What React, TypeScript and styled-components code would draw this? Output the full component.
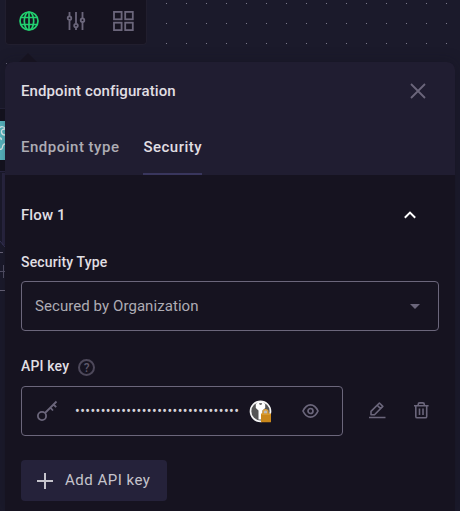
import React from 'react';
import styled, { createGlobalStyle } from 'styled-components';

const GlobalStyle = createGlobalStyle`
  * { box-sizing: border-box; }
  body {
    margin: 0;
    background: #1b1a2b;
    font-family: Roboto, sans-serif;
    font-size: 14px;
    color: #e0dfe3;
    overflow: hidden;
  }
  svg { display: block; flex: none; }
  button { font: inherit; color: inherit; border: 0; padding: 0; background: none; }
`;

const Screen = styled.div`
  position: relative;
  width: 460px;
  height: 511px;
  overflow: hidden;
  background-color: #1b1a2b;
`;

const Backdrop = styled.svg`
  position: absolute;
  inset: 0;
`;

const Content = styled.div`
  position: relative;
  display: flex;
  flex-direction: column;
  width: 450px;
  height: 511px;
  margin-left: 5px;
`;

const Toolbar = styled.nav`
  display: flex;
  align-items: center;
  gap: 27px;
  width: 142px;
  height: 45px;
  padding: 0 13px 3px;
  background: #161320;
  border: 1px solid #211e2e;
  border-top: 0;
  border-radius: 0 0 4px 4px;
`;

const ToolButton = styled.button<{ $active?: boolean }>`
  display: flex;
  width: 20px;
  height: 20px;
  color: ${p => (p.$active ? '#22d06f' : '#6b667b')};
`;

const Pointer = styled.div`
  width: 18px;
  height: 9px;
  margin: 8px 0 0 14px;
  background: #161320;
  clip-path: polygon(50% 0, 100% 100%, 0 100%);
`;

const Panel = styled.section`
  flex: 1;
  background: #161320;
  border-radius: 8px 8px 0 0;
  overflow: hidden;
  box-shadow: 0 0 14px rgba(18, 16, 28, 0.35);
`;

const PanelHeader = styled.header`
  height: 113px;
  padding: 0 16px;
  background: #201d31;
`;

const TitleRow = styled.div`
  display: flex;
  align-items: center;
  justify-content: space-between;
  height: 58px;
  padding-right: 13px;
`;

const Title = styled.h1`
  margin: 0;
  font-size: 15px;
  font-weight: 500;
  letter-spacing: 0.1px;
`;

const CloseButton = styled.button`
  display: flex;
  color: #6b667b;
`;

const Tabs = styled.div`
  display: flex;
  gap: 24px;
  height: 55px;
`;

const Tab = styled.button<{ $active?: boolean }>`
  display: flex;
  align-items: center;
  height: 55px;
  font-size: 15px;
  font-weight: 500;
  letter-spacing: 0.5px;
  color: ${p => (p.$active ? '#e0dfe3' : '#aeacb4')};
  border-bottom: 2px solid ${p => (p.$active ? '#39365d' : 'transparent')};
`;

const PanelBody = styled.div`
  padding: 0 16px;
`;

const FlowRow = styled.div`
  display: flex;
  align-items: center;
  justify-content: space-between;
  height: 80px;
  padding-right: 23px;
  font-size: 15px;
  font-weight: 500;
  letter-spacing: 0.1px;
`;

const FieldLabel = styled.div`
  display: flex;
  gap: 9px;
  line-height: 16px;
  font-weight: 500;
  letter-spacing: 0.15px;
`;

const TypeLabel = styled(FieldLabel)`
  height: 26px;
  margin-top: -1px;
  margin-bottom: 1px;
`;

const KeyLabel = styled(FieldLabel)`
  height: 55px;
  padding-top: 27px;
`;

const HelpMark = styled.span`
  display: flex;
  align-items: center;
  justify-content: center;
  width: 17px;
  height: 17px;
  margin-top: 1px;
  border: 2px solid #4d485a;
  border-radius: 50%;
  font-size: 12px;
  line-height: 12px;
  letter-spacing: 0;
  color: #5d586b;
`;

const Select = styled.div`
  display: flex;
  align-items: center;
  justify-content: space-between;
  height: 50px;
  padding: 0 18px 0 13px;
  border: 1px solid #6b667b;
  border-radius: 4px;
  font-size: 15px;
  letter-spacing: 0.07px;
  color: #aeacb4;
`;

const KeyRow = styled.div`
  display: flex;
  align-items: center;
  height: 50px;
  color: #6b667b;
`;

const KeyInput = styled.div`
  display: flex;
  align-items: center;
  width: 322px;
  height: 50px;
  padding-left: 14px;
  border: 1px solid #6b667b;
  border-radius: 4px;
`;

const Secret = styled.span`
  width: 166px;
  margin-left: 17px;
  font-size: 14px;
  letter-spacing: 0.41px;
  white-space: nowrap;
  color: #d6d4da;
`;

const IconSlot = styled.span<{ $gap: number }>`
  display: flex;
  margin-left: ${p => p.$gap}px;
`;

const AddButton = styled.button`
  display: flex;
  align-items: center;
  gap: 12px;
  width: 146px;
  height: 41px;
  margin-top: 24px;
  padding-left: 16px;
  border-radius: 4px;
  background: #25223a;
  font-size: 15px;
  letter-spacing: 0.5px;
  color: #c6c4cc;
  white-space: nowrap;
`;

const AddText = styled.span`
  padding-bottom: 2px;
`;

const dotColumns = Array.from({ length: 15 }, (_, i) => 166 + i * 20);

const CanvasBackdrop = () => (
  <Backdrop width="460" height="511" viewBox="0 0 460 511" shapeRendering="crispEdges">
    {[3, 23, 43].map(y => dotColumns.map(x => <rect key={`${x}-${y}`} x={x} y={y} width="1" height="1" fill="#7c7b8b" />))}
    <rect x="6" y="63" width="1" height="1" fill="#6b6a7c" />
    <rect x="0" y="109" width="5" height="62" fill="#14121e" />
    <rect x="0" y="108" width="5" height="1" fill="#252338" />
    <rect x="0" y="121" width="5" height="39" fill="#5abcc6" />
    <g shapeRendering="auto" fill="none" stroke="#e4f7f8" strokeWidth="1.3">
      <path d="M0 127.5Q2 125.5 5 128M5 129Q1 129 1.5 132.5Q2 135 5 135M0 138Q2 138 1 140M0 149Q2 150 2.5 147Q3 144 5 144" />
    </g>
    <rect x="0" y="171" width="5" height="1" fill="#292641" />
    <rect x="2" y="173" width="3" height="72" fill="#292641" />
    <path d="M0 241L5 247" stroke="#38355a" shapeRendering="auto" />
    <path d="M0 252.5H3M0 290.5H5" stroke="#6b667b" />
    <path d="M0 271.5H5M3.5 265V278" stroke="#57536a" />
  </Backdrop>
);

const GlobeIcon = () => (
  <svg width="20" height="20" viewBox="0 0 20 20" fill="none" stroke="currentColor" strokeWidth="1.7">
    <circle cx="10" cy="10" r="9" />
    <ellipse cx="10" cy="10" rx="4.7" ry="9" />
    <path d="M10 1V19M2 6.5H18M2 13.5H18" />
  </svg>
);

const SlidersIcon = () => (
  <svg width="20" height="20" viewBox="0 0 20 20" fill="none" stroke="currentColor" strokeWidth="1.8">
    <path d="M3.5 1V5M3.5 9.5V19M10 1V12.5M10 16.5V19M16.5 1V7M16.5 11V19" />
    <circle cx="3.5" cy="7.2" r="1.8" />
    <circle cx="10" cy="14.6" r="1.8" />
    <circle cx="16.5" cy="9.2" r="1.8" />
  </svg>
);

const GridIcon = () => (
  <svg width="21" height="20" viewBox="0 0 21 20" fill="none" stroke="currentColor" strokeWidth="1.8">
    <rect x="1" y="0.9" width="7.6" height="7.4" />
    <rect x="12.2" y="0.9" width="7.6" height="7.4" />
    <rect x="1" y="11.7" width="7.6" height="7.4" />
    <rect x="12.2" y="11.7" width="7.6" height="7.4" />
  </svg>
);

const CloseIcon = () => (
  <svg width="16" height="16" viewBox="0 0 16 16" stroke="currentColor" strokeWidth="1.8">
    <path d="M1 1L15 15M15 1L1 15" />
  </svg>
);

const ChevronUp = () => (
  <svg width="12" height="8" viewBox="0 0 12 8" fill="none" stroke="#fff" strokeWidth="2">
    <path d="M0.8 6.7L6 1.6L11.2 6.7" />
  </svg>
);

const Caret = () => (
  <svg width="10" height="5" viewBox="0 0 10 5" fill="#6b667b">
    <path d="M0 0H10L5 5Z" />
  </svg>
);

const KeyIcon = () => (
  <svg width="22" height="22" viewBox="0 0 22 22" fill="none" stroke="currentColor" strokeWidth="1.8">
    <circle cx="6" cy="16" r="4.1" />
    <path d="M9 13L20.5 1.5M14.3 7.7L17 10.5M17.5 4.5L20.2 7.2" />
  </svg>
);

const KeeperBadge = () => (
  <svg width="23" height="23" viewBox="0 0 23 23">
    <circle cx="11.5" cy="11.3" r="10" fill="#555" stroke="#f5f5f5" strokeWidth="1.7" />
    <path d="M6.8 4L9.3 2H13.7L16.2 4V8L13.5 10.5V15L12 19.5H9.5V10.5L6.8 8Z" fill="#fff" />
    <path d="M10 3.2H13.2L12.4 4.8H10.8Z" fill="#444" />
    <path d="M14.2 14V11.7Q14.2 9.7 16.5 9.7Q18.8 9.7 18.8 11.7V14" fill="#bbb" stroke="#dba03b" strokeWidth="1.6" />
    <rect x="12" y="13.5" width="10" height="8.8" rx="0.5" fill="#c9871b" />
    <path d="M12.5 14.2H21.5" stroke="#e1a234" />
  </svg>
);

const EyeIcon = () => (
  <svg width="17" height="16" viewBox="0 0 17 16" fill="none" stroke="currentColor" strokeWidth="1.7">
    <path d="M1 8Q3.8 1.8 8.5 1.8Q13.2 1.8 16 8Q13.2 14.2 8.5 14.2Q3.8 14.2 1 8Z" />
    <circle cx="8.5" cy="8" r="2.5" />
  </svg>
);

const EditIcon = () => (
  <svg width="17" height="18" viewBox="0 0 17 18" fill="none" stroke="currentColor" strokeWidth="1.6">
    <path d="M0 15.5H16.5" />
    <path d="M2 12.7V9.4L10.4 1L13.8 4.4L5.5 12.7ZM8.2 3.2L11.6 6.6" strokeLinejoin="round" />
  </svg>
);

const TrashIcon = () => (
  <svg width="15" height="18" viewBox="0 0 15 18" fill="none" stroke="currentColor" strokeWidth="1.6">
    <path d="M0 3.7H14.6M4.2 3.7V2.5Q4.2 0.9 5.7 0.9H8.8Q10.3 0.9 10.3 2.5V3.7M1.8 3.7V14.4Q1.8 15.8 3.2 15.8H11.3Q12.7 15.8 12.7 14.4V3.7M5.5 6.5V13M9 6.5V13" />
  </svg>
);

const PlusIcon = () => (
  <svg width="16" height="16" viewBox="0 0 16 16" stroke="currentColor" strokeWidth="2">
    <path d="M0 8H16M8 0V16" />
  </svg>
);

export default function App() {
  return (
    <>
      <GlobalStyle />
      <Screen>
        <CanvasBackdrop />
        <Content>
          <Toolbar>
            <ToolButton $active aria-label="Endpoint"><GlobeIcon /></ToolButton>
            <ToolButton aria-label="Settings"><SlidersIcon /></ToolButton>
            <ToolButton aria-label="Modules"><GridIcon /></ToolButton>
          </Toolbar>
          <Pointer />
          <Panel>
            <PanelHeader>
              <TitleRow>
                <Title>Endpoint configuration</Title>
                <CloseButton aria-label="Close"><CloseIcon /></CloseButton>
              </TitleRow>
              <Tabs>
                <Tab>Endpoint type</Tab>
                <Tab $active>Security</Tab>
              </Tabs>
            </PanelHeader>
            <PanelBody>
              <FlowRow>Flow 1<ChevronUp /></FlowRow>
              <TypeLabel>Security Type</TypeLabel>
              <Select>Secured by Organization<Caret /></Select>
              <KeyLabel>API key<HelpMark>?</HelpMark></KeyLabel>
              <KeyRow>
                <KeyInput>
                  <KeyIcon />
                  <Secret>{'•'.repeat(32)}</Secret>
                  <IconSlot $gap={8}><KeeperBadge /></IconSlot>
                  <IconSlot $gap={30}><EyeIcon /></IconSlot>
                </KeyInput>
                <IconSlot $gap={26}><EditIcon /></IconSlot>
                <IconSlot $gap={28}><TrashIcon /></IconSlot>
              </KeyRow>
              <AddButton><PlusIcon /><AddText>Add API key</AddText></AddButton>
            </PanelBody>
          </Panel>
        </Content>
      </Screen>
    </>
  );
}
